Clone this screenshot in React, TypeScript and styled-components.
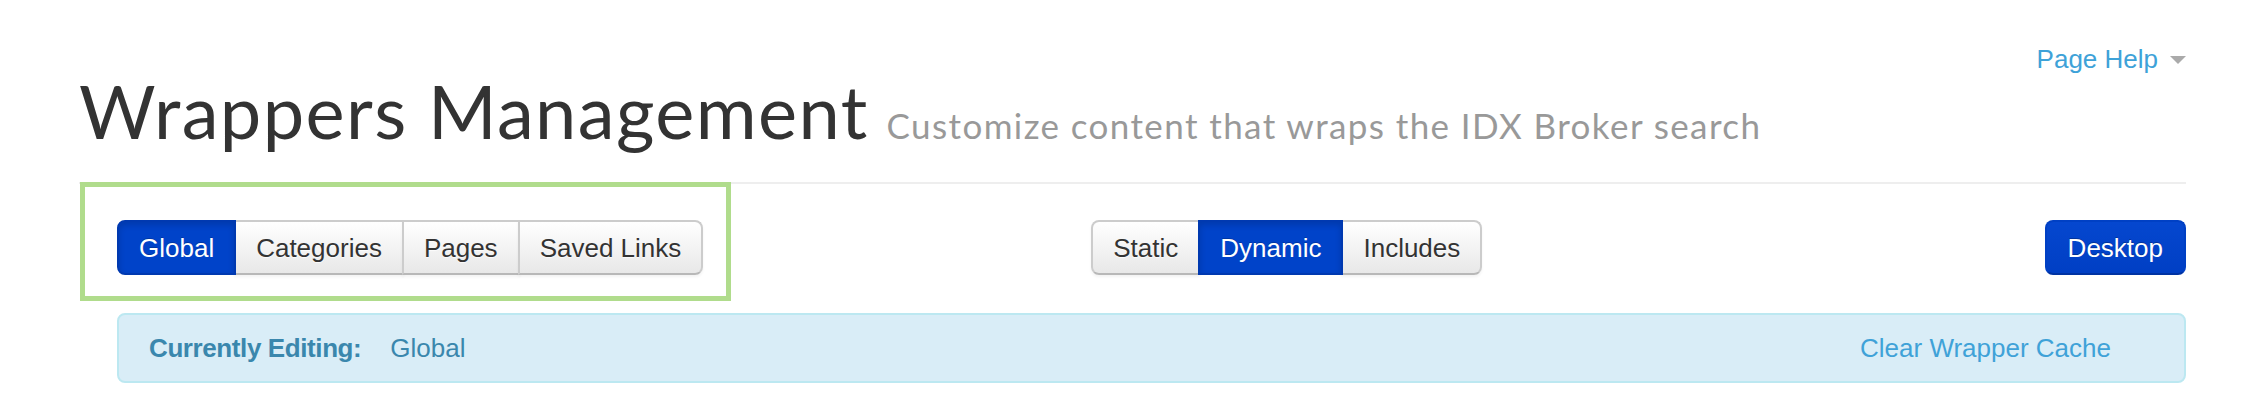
import styled, { createGlobalStyle, css } from "styled-components";

/*
 * Wrappers management header: page title, wrapper scope / type toggles,
 * and the "currently editing" notice.
 */

const GlobalStyle = createGlobalStyle`
  html, body {
    margin: 0;
    padding: 0;
    background: #fff;
  }
  body {
    font-family: "Liberation Sans", Arial, sans-serif;
    color: #333;
  }
`;

const scopes = ["Global", "Categories", "Pages", "Saved Links"];
const kinds = ["Static", "Dynamic", "Includes"];

export default function App() {
  return (
    <>
      <GlobalStyle />
      <Page>
        <HelpRow>
          <HelpLink href="#">Page Help</HelpLink>
          <Caret />
        </HelpRow>
        <Title>
          Wrappers Management
          <Subtitle>Customize content that wraps the IDX Broker search</Subtitle>
        </Title>
        <Divider />
        <Body>
          <Toolbar>
            <Highlight />
            <BtnGroup>
              {scopes.map((s) => (
                <GroupBtn key={s} $active={s === "Global"}>
                  {s}
                </GroupBtn>
              ))}
            </BtnGroup>
            <BtnGroup $offset={388}>
              {kinds.map((k) => (
                <GroupBtn key={k} $active={k === "Dynamic"}>
                  {k}
                </GroupBtn>
              ))}
            </BtnGroup>
            <PrimaryBtn>Desktop</PrimaryBtn>
          </Toolbar>
          <Notice>
            <NoticeLabel>Currently Editing:</NoticeLabel>
            <NoticeValue>Global</NoticeValue>
            <ClearLink href="#">Clear Wrapper Cache</ClearLink>
          </Notice>
        </Body>
      </Page>
    </>
  );
}

const Page = styled.div`
  padding: 44px 76px 0 79px;
`;

const HelpRow = styled.div`
  display: flex;
  justify-content: flex-end;
  align-items: center;
  gap: 12px;
  height: 30px;
`;

const HelpLink = styled.a`
  font-size: 26px;
  line-height: 30px;
  color: #3ea2d8;
  text-decoration: none;
`;

const Caret = styled.span`
  width: 0;
  height: 0;
  margin-top: 2px;
  border-top: 8px solid #aaa;
  border-left: 8px solid transparent;
  border-right: 8px solid transparent;
`;

const Title = styled.h1`
  margin: 0;
  font-family: Lato, "Open Sans", sans-serif;
  font-weight: 400;
  font-size: 74px;
  line-height: 74px;
  letter-spacing: 1.4px;
  color: #333;
  white-space: nowrap;
`;

const Subtitle = styled.small`
  margin-left: 18px;
  font-size: 35px;
  line-height: 1;
  letter-spacing: 1.4px;
  color: #999;
`;

const Divider = styled.hr`
  margin: 34px 0 0;
  border: 0;
  border-top: 2px solid #eee;
`;

const Body = styled.div`
  padding-left: 38px;
`;

const Toolbar = styled.div`
  position: relative;
  display: flex;
  align-items: center;
  margin-top: 36px;
`;

const Highlight = styled.div`
  position: absolute;
  left: -37px;
  top: -38px;
  width: 651px;
  height: 119px;
  box-sizing: border-box;
  border: 5px solid #b0dc8c;
  pointer-events: none;
`;

const BtnGroup = styled.div<{ $offset?: number }>`
  display: flex;
  margin-left: ${(p) => p.$offset ?? 0}px;
`;

const btnBase = css`
  box-sizing: border-box;
  height: 55px;
  display: flex;
  align-items: center;
  font-family: "Liberation Sans", Arial, sans-serif;
  font-size: 26px;
  line-height: 30px;
  border: 2px solid;
  cursor: pointer;
`;

const activeLook = css`
  color: #fff;
  background: #0043c9;
  border-color: #0039b0;
  box-shadow: inset 0 3px 6px rgba(0, 0, 0, 0.15);
  text-shadow: 0 -1px 0 rgba(0, 0, 0, 0.2);
`;

const GroupBtn = styled.button<{ $active?: boolean }>`
  ${btnBase}
  position: relative;
  padding: 0 20px;
  color: #333;
  background: linear-gradient(#ffffff, #e8e8e8);
  border-color: #cccccc #cccccc #b8b8b8;
  text-shadow: 0 1px 1px rgba(255, 255, 255, 0.75);
  box-shadow: 0 2px 3px rgba(0, 0, 0, 0.05);
  border-radius: 0;

  & + & {
    margin-left: -2px;
  }
  &:first-child {
    border-radius: 8px 0 0 8px;
  }
  &:last-child {
    border-radius: 0 8px 8px 0;
  }
  ${(p) =>
    p.$active &&
    css`
      ${activeLook}
      z-index: 1;
    `}
`;

const PrimaryBtn = styled.button`
  ${btnBase}
  margin-left: auto;
  padding: 0 21px;
  color: #fff;
  background: linear-gradient(#0547cf, #003fc4);
  border-color: #0040c4 #0040c4 #0033a3;
  border-radius: 8px;
  text-shadow: 0 -1px 0 rgba(0, 0, 0, 0.25);
`;

const Notice = styled.div`
  box-sizing: border-box;
  display: flex;
  align-items: center;
  height: 70px;
  margin-top: 38px;
  padding: 0 30px;
  background: #d9edf7;
  border: 2px solid #bce8f1;
  border-radius: 8px;
  font-size: 26px;
  color: #3a87ad;
`;

const NoticeLabel = styled.strong`
  font-weight: 700;
  letter-spacing: -0.4px;
`;

const NoticeValue = styled.span`
  margin-left: 29px;
`;

const ClearLink = styled.a`
  margin-left: auto;
  margin-right: 43px;
  color: #3fa2d8;
  text-decoration: none;
`;
